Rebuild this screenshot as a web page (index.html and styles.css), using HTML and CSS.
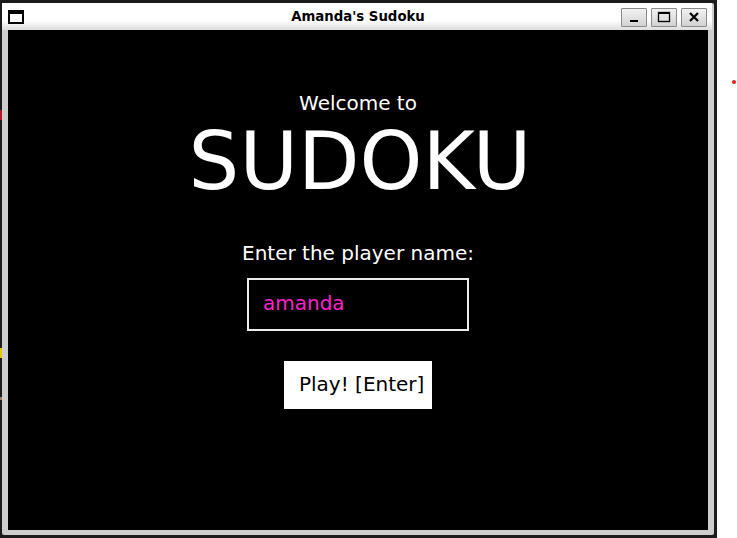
FILE: index.html
```html
<!DOCTYPE html>
<html>
<head>
<meta charset="utf-8">
<title>Amanda's Sudoku</title>
<link rel="stylesheet" href="styles.css">
</head>
<body>
<div class="screen">
  <div class="desktop">
    <span class="speck speck-red"></span>
    <span class="speck speck-yellow"></span>
    <span class="speck speck-tan"></span>
    <div class="window">
      <div class="titlebar">
        <svg class="win-icon" width="16" height="14" viewBox="0 0 16 14">
          <rect x="1" y="1" width="14" height="12" fill="#fff" stroke="#000" stroke-width="2"/>
          <rect x="0" y="0" width="16" height="4" fill="#000"/>
        </svg>
        <div class="title">Amanda's Sudoku</div>
        <div class="controls">
          <div class="ctl">
            <svg width="26" height="19" viewBox="0 0 26 19"><rect x="9" y="12" width="8" height="2" fill="#000"/></svg>
          </div>
          <div class="ctl">
            <svg width="26" height="19" viewBox="0 0 26 19"><rect x="7.5" y="4.5" width="11" height="9" fill="none" stroke="#000" stroke-width="1.3"/><rect x="7" y="4" width="12" height="2" fill="#000"/></svg>
          </div>
          <div class="ctl">
            <svg width="26" height="19" viewBox="0 0 26 19"><path d="M9 5 L17 13 M17 5 L9 13" stroke="#000" stroke-width="2.2" fill="none"/></svg>
          </div>
        </div>
      </div>
      <div class="content">
        <div class="welcome">Welcome to</div>
        <div class="logo">SUDOKU</div>
        <div class="prompt">Enter the player name:</div>
        <div class="namebox">amanda</div>
        <div class="play">Play! [Enter]</div>
      </div>
    </div>
  </div>
  <div class="side">
    <span class="dot"></span>
  </div>
</div>
</body>
</html>
```
FILE: styles.css
```css
html, body {
  margin: 0;
  padding: 0;
}
body {
  width: 737px;
  height: 538px;
  overflow: hidden;
  background: #fff;
  font-family: "DejaVu Sans", sans-serif;
}
.screen {
  display: flex;
  width: 737px;
  height: 538px;
}
.desktop {
  position: relative;
  width: 717px;
  height: 538px;
  box-sizing: border-box;
  padding: 3px 3px 3px 2px;
  background: #1c1c1c;
}
.speck {
  position: absolute;
  left: 0;
  width: 2px;
}
.speck-red { top: 110px; height: 10px; background: #b01a2a; }
.speck-yellow { top: 348px; height: 10px; background: #e8c800; }
.speck-tan { top: 397px; height: 3px; background: #a08060; }
.side {
  position: relative;
  flex: 1;
  background: #fff;
}
.dot {
  position: absolute;
  left: 15px;
  top: 80px;
  width: 4px;
  height: 4px;
  border-radius: 50%;
  background: #e02020;
}
.window {
  width: 712px;
  height: 532px;
  background: #cdcdcd;
  display: flex;
  flex-direction: column;
  border-radius: 2px;
}
.titlebar {
  position: relative;
  height: 27px;
  flex: none;
  background: linear-gradient(#ffffff 0%, #ffffff 65%, #dcdcdc 100%);
  margin-right: 2px;
  display: flex;
  align-items: center;
}
.win-icon {
  position: absolute;
  left: 6px;
  top: 7px;
}
.title {
  flex: 1;
  text-align: center;
  font-weight: bold;
  font-size: 13.3px;
  line-height: 27px;
  color: #000;
  padding-left: 2px;
}
.controls {
  position: absolute;
  right: 5px;
  top: 5px;
  display: flex;
  gap: 4px;
}
.ctl {
  width: 26px;
  height: 19px;
  box-sizing: border-box;
  border: 1px solid #8a8a8a;
  background: linear-gradient(#f2f2f2, #d2d2d2);
  display: flex;
  align-items: center;
  justify-content: center;
  border-radius: 1px;
}
.ctl svg {
  display: block;
  margin: -1px;
}
.content {
  margin: 0 6px;
  height: 500px;
  background: #000;
  display: flex;
  flex-direction: column;
  align-items: center;
  color: #fff;
}
.welcome {
  margin-top: 61px;
  font-size: 20px;
  line-height: 24px;
}
.logo {
  margin-top: 7px;
  margin-left: 4px;
  font-size: 80px;
  line-height: 80px;
}
.prompt {
  margin-top: 39px;
  font-size: 20px;
  line-height: 24px;
}
.namebox {
  margin-top: 13px;
  width: 222px;
  height: 53px;
  box-sizing: border-box;
  border: 2px solid #ececec;
  padding: 0 0 2px 14px;
  font-size: 20px;
  line-height: 47px;
  color: #ff22cc;
}
.play {
  margin-top: 30px;
  width: 148px;
  height: 48px;
  box-sizing: border-box;
  background: #fff;
  color: #000;
  padding: 0 0 2px 15px;
  font-size: 20px;
  line-height: 46px;
}
```
